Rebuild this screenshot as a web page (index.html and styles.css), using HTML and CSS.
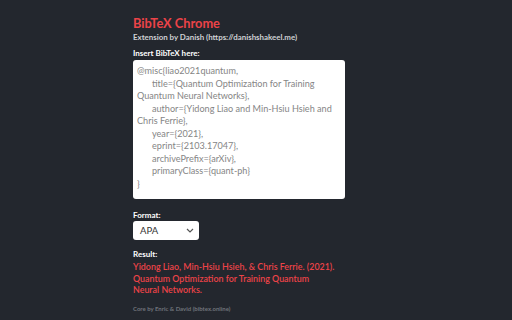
FILE: index.html
```html
<!DOCTYPE html>
<html>
<head>
<meta charset="utf-8">
<link rel="stylesheet" href="styles.css">
</head>
<body>
<main class="app">
  <h1 class="title">BibTeX Chrome</h1>
  <p class="byline">Extension by Danish (https://danishshakeel.me)</p>
  <label class="label label-input">Insert BibTeX here:</label>
  <div class="editor"><div class="line">@misc{liao2021quantum,</div><div class="line ind">title={Quantum Optimization for Training</div><div class="line">Quantum Neural Networks},</div><div class="line ind">author={Yidong Liao and Min-Hsiu Hsieh and</div><div class="line">Chris Ferrie},</div><div class="line ind">year={2021},</div><div class="line ind">eprint={2103.17047},</div><div class="line ind">archivePrefix={arXiv},</div><div class="line ind">primaryClass={quant-ph}</div><div class="line">}</div></div>
  <label class="label label-format">Format:</label>
  <div class="select"><span>APA</span><svg class="chev" width="8" height="5" viewBox="0 0 8 5"><path d="M1 1l3 3 3-3" fill="none" stroke="#555" stroke-width="1.2"/></svg></div>
  <label class="label label-result">Result:</label>
  <p class="result">Yidong Liao, Min-Hsiu Hsieh, &amp; Chris Ferrie. (2021). Quantum Optimization for Training Quantum Neural Networks.</p>
  <p class="footer">Core by Enric &amp; David (bibtex.online)</p>
</main>
</body>
</html>
```
FILE: styles.css
```css
html, body {
  margin: 0;
  padding: 0;
  background: #23272e;
}
body {
  font-family: "Lato", "Noto Sans", sans-serif;
  width: 512px;
  height: 320px;
  overflow: hidden;
}
.app {
  padding: 15px 0 0 133px;
  width: 212px;
  display: flex;
  flex-direction: column;
  align-items: flex-start;
}
.title {
  margin: 0;
  font-size: 12.8px;
  font-weight: 700;
  color: #ec4348;
  line-height: 17px;
}
.byline {
  margin: 0;
  font-size: 7.9px;
  font-weight: 700;
  color: #cfd1d4;
  line-height: 10px;
}
.label {
  display: block;
  font-size: 8px;
  font-weight: 700;
  color: #ffffff;
  line-height: 10px;
}
.label-input { margin-top: 6px; }
.editor {
  margin-top: 2px;
  box-sizing: border-box;
  width: 212px;
  height: 139px;
  background: #ffffff;
  border-radius: 3px;
  padding: 5px 4px 3px;
  font-size: 9.1px;
  line-height: 12.55px;
  color: #858585;
  white-space: nowrap;
}
.ind { padding-left: 15px; }
.label-format { margin-top: 11px; }
.select {
  margin-top: 1px;
  box-sizing: border-box;
  width: 66px;
  height: 19px;
  background: #fff;
  border-radius: 3px;
  display: flex;
  align-items: center;
  justify-content: space-between;
  padding: 0 5px 0 7px;
  font-size: 9.5px;
  color: #333;
}
.chev { display: block; }
.label-result { margin-top: 9px; }
.result {
  margin: 2px 0 0;
  width: 203px;
  font-size: 8.9px;
  font-weight: 600;
  line-height: 11.7px;
  color: #ec4348;
}
.footer {
  margin: 9px 0 0;
  font-size: 6px;
  font-weight: 700;
  color: #6f737a;
}
```
